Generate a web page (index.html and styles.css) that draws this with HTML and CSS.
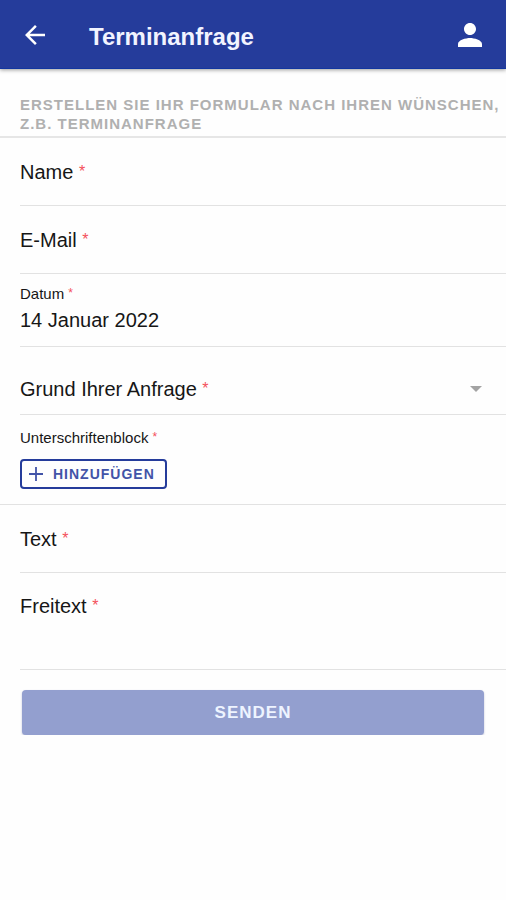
FILE: index.html
```html
<!DOCTYPE html>
<html lang="de">
<head>
  <meta charset="utf-8">
  <meta name="viewport" content="width=device-width, initial-scale=1">
  <title>Terminanfrage</title>
  <link rel="stylesheet" href="styles.css">
</head>
<body>
  <header class="app-bar">
    <button class="icon-button" type="button" aria-label="Zurück">
      <svg width="30" height="30" viewBox="0 0 24 24" fill="currentColor" aria-hidden="true"><path d="M20 11H7.83l5.59-5.59L12 4l-8 8 8 8 1.41-1.41L7.83 13H20z"/></svg>
    </button>
    <h1 class="title">Terminanfrage</h1>
    <button class="icon-button" type="button" aria-label="Profil">
      <svg width="36" height="36" viewBox="0 0 24 24" fill="currentColor" aria-hidden="true"><path d="M12 12c2.21 0 4-1.79 4-4s-1.79-4-4-4-4 1.79-4 4 1.79 4 4 4zm0 2c-2.67 0-8 1.34-8 4v2h16v-2c0-2.66-5.33-4-8-4z"/></svg>
    </button>
  </header>
  <main>
    <h2 class="intro">Erstellen Sie Ihr Formular nach Ihren Wünschen, z.B. Terminanfrage</h2>
    <form class="form">
      <div class="field">
        <label for="name">Name <span class="required">*</span></label>
        <input class="control" id="name" type="text">
      </div>
      <div class="field">
        <label for="email">E-Mail <span class="required">*</span></label>
        <input class="control" id="email" type="email">
      </div>
      <div class="field field-stacked">
        <label class="small-label" for="date">Datum <span class="required">*</span></label>
        <input class="control" id="date" type="text" value="14 Januar 2022">
      </div>
      <div class="field field-select">
        <label for="reason">Grund Ihrer Anfrage <span class="required">*</span></label>
        <select class="control" id="reason"><option value=""></option></select>
        <svg class="caret" width="12" height="6" viewBox="0 0 12 6" aria-hidden="true"><path d="M0 0h12L6 6z" fill="currentColor"/></svg>
      </div>
      <div class="field field-stacked field-signature">
        <label class="small-label" for="signature">Unterschriftenblock <span class="required">*</span></label>
        <button class="add-button" id="signature" type="button">
          <svg width="14" height="14" viewBox="0 0 14 14" aria-hidden="true"><path d="M7 0v14M0 7h14" stroke="currentColor" stroke-width="1.8"/></svg>
          Hinzufügen
        </button>
      </div>
      <div class="field">
        <label for="text">Text <span class="required">*</span></label>
        <input class="control" id="text" type="text">
      </div>
      <div class="field field-area">
        <label for="freetext">Freitext <span class="required">*</span></label>
        <textarea class="control" id="freetext" rows="2"></textarea>
      </div>
      <button class="submit" type="submit">Senden</button>
    </form>
  </main>
</body>
</html>
```
FILE: styles.css
```css
* {
  box-sizing: border-box;
}

body {
  margin: 0;
  background: #fefefe;
  color: #161616;
  font-family: "Liberation Sans", Arial, sans-serif;
  font-size: 20px;
  line-height: 24px;
}

button,
input,
select,
textarea {
  font: inherit;
  color: inherit;
}

.app-bar {
  display: flex;
  align-items: center;
  height: 69px;
  padding: 2px 18px 0 20px;
  background: #253c9b;
  border-bottom: 1px solid #1236a0;
  box-shadow: 0 1px 4px rgba(0, 0, 0, 0.4);
  color: #fff;
}

.icon-button {
  display: flex;
  padding: 0;
  border: 0;
  background: none;
}

.title {
  flex: 1;
  margin: 4px 0 0 39px;
  color: #f2f4ff;
  font-size: 24px;
  line-height: 32px;
}

.intro {
  margin: 0;
  padding: 26px 0 3px 20px;
  border-bottom: 2px solid #e6e6e6;
  color: #b0b0b0;
  font-size: 15px;
  line-height: 19px;
  letter-spacing: 1px;
  text-transform: uppercase;
}

.form {
  display: flex;
  flex-direction: column;
}

.field {
  display: flex;
  align-items: center;
  min-height: 68px;
  margin-left: 20px;
  border-bottom: 1px solid #e2e2e2;
}

.field-stacked {
  flex-direction: column;
  align-items: stretch;
  padding: 9px 0 11px;
}

.small-label {
  font-size: 15px;
  line-height: 22px;
}

.required {
  color: #f4505a;
  font-size: 16px;
  line-height: 16px;
  vertical-align: 2px;
}

.small-label .required {
  font-size: 12px;
}

.control {
  flex: 1;
  min-width: 0;
  padding: 0;
  border: 0;
  outline: 0;
  background: none;
  appearance: none;
  resize: none;
}

.field-stacked .control {
  flex: none;
  line-height: 30px;
}

.field-select {
  padding: 16px 24px 0 0;
}

.caret {
  color: #a3a3a3;
}

.field-signature {
  margin-left: 0;
  padding: 12px 20px 15px;
}

.add-button {
  display: flex;
  align-items: center;
  align-self: flex-start;
  gap: 10px;
  height: 30px;
  margin-top: 10px;
  padding: 0 10px 0 7px;
  border: 2px solid #253c9b;
  border-radius: 4px;
  background: none;
  color: #4254a8;
  font-size: 14px;
  font-weight: bold;
  letter-spacing: 1px;
  text-transform: uppercase;
}

.field-area {
  align-items: flex-start;
  padding: 21px 0 27px;
}

.submit {
  height: 45px;
  margin: 20px 22px 0;
  border: 0;
  border-radius: 4px;
  background: #939fcf;
  box-shadow: 0 1px 2px rgba(80, 90, 150, 0.4);
  color: #eef4ff;
  font-size: 17px;
  font-weight: bold;
  letter-spacing: 1px;
  text-transform: uppercase;
}
```
